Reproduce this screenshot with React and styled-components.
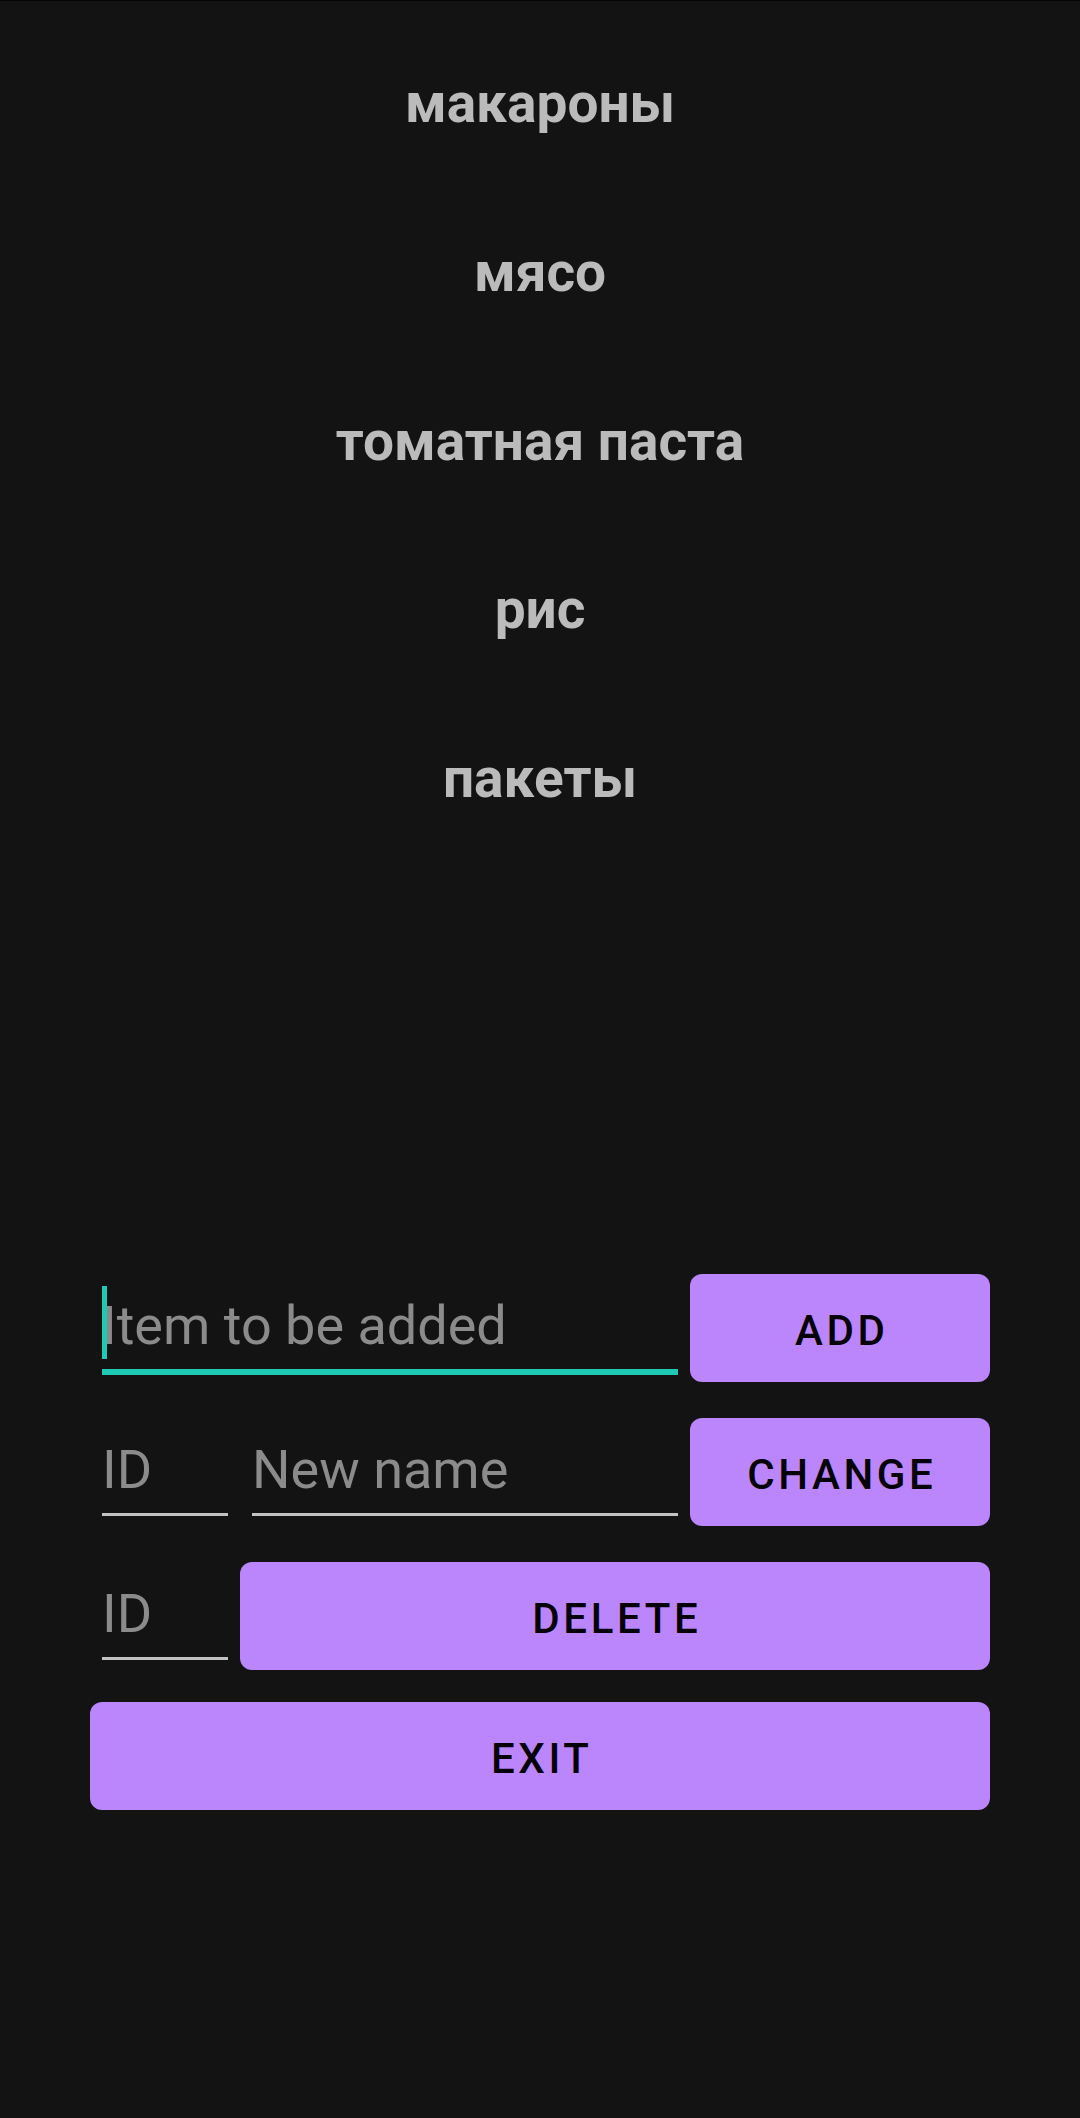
import React from "react";
import styled, { createGlobalStyle } from "styled-components";

const GlobalStyle = createGlobalStyle`
	html, body {
		margin: 0;
		padding: 0;
		background-color: #131313;
	}
	* {
		box-sizing: border-box;
	}
`;

const Screen = styled.div`
	width: 1080px;
	min-height: 2118px;
	background-color: #131313;
	border-top: 1px solid #040404;
	font-family: Roboto, "Noto Sans", sans-serif;
	display: flex;
	flex-direction: column;
`;

// List

const List = styled.ul`
	list-style: none;
	margin: 0;
	padding: 18px 0 0;
`;

const Item = styled.li`
	height: 168.75px;
	line-height: 168.75px;
	text-align: center;
	font-size: 55px;
	font-weight: 700;
	color: #bbbbbb;
`;

// Form

const Form = styled.form`
	margin: 411px 90px 0;
	display: flex;
	flex-direction: column;
`;

const Row = styled.div`
	display: flex;
	align-items: flex-start;
	padding-left: ${(props) => (props.inset ? "12px" : "0")};
	gap: ${(props) => props.gap || 12}px;
	margin-bottom: ${(props) => props.spacing || 36}px;
`;

const Field = styled.div`
	position: relative;
	flex: ${(props) => (props.width ? "none" : "1")};
	width: ${(props) => (props.width ? `${props.width}px` : "auto")};
	min-width: 0;
`;

const Input = styled.input`
	display: block;
	width: 100%;
	height: ${(props) => (props.active ? 101 : 98)}px;
	padding: 8px 0 0;
	margin: 0;
	border: none;
	border-bottom: ${(props) => (props.active ? "6px solid #1fcab4" : "3px solid #c2c2c2")};
	background: transparent;
	outline: none;
	font-family: Roboto, "Noto Sans", sans-serif;
	font-size: 54px;
	color: #e0e0e0;
	caret-color: transparent;
	&::placeholder {
		color: #8b8b8b;
		opacity: 1;
	}
`;

const Caret = styled.span`
	position: absolute;
	left: 0;
	top: 12px;
	width: 5px;
	height: 73px;
	background-color: #1fcab4;
`;

const Button = styled.button`
	flex: ${(props) => (props.width ? "none" : "1")};
	width: ${(props) => (props.width ? `${props.width}px` : "auto")};
	margin-left: ${(props) => props.pull || 0}px;
	height: 108px;
	border: none;
	border-radius: 12px;
	background-color: #bb86fc;
	color: #050008;
	font-family: Roboto, "Noto Sans", sans-serif;
	font-size: 42px;
	font-weight: 500;
	letter-spacing: 3.6px;
	text-transform: uppercase;
	padding: 5px 0 0 3.6px;
	cursor: pointer;
`;

const items = ["макароны", "мясо", "томатная паста", "рис", "пакеты"];

const App = () => {
	return (
		<>
			<GlobalStyle />
			<Screen>
				<List>
					{items.map((i) => (
						<Item key={i}>{i}</Item>
					))}
				</List>
				<Form onSubmit={(e) => e.preventDefault()}>
					<Row inset>
						<Field>
							<Input active placeholder="Item to be added" />
							<Caret />
						</Field>
						<Button type="button" width={300}>
							Add
						</Button>
					</Row>
					<Row inset gap={24}>
						<Field width={126}>
							<Input placeholder="ID" />
						</Field>
						<Field>
							<Input placeholder="New name" />
						</Field>
						<Button type="button" width={300} pull={-12}>
							Change
						</Button>
					</Row>
					<Row inset spacing={32}>
						<Field width={126}>
							<Input placeholder="ID" />
						</Field>
						<Button type="button">Delete</Button>
					</Row>
					<Row>
						<Button type="button">Exit</Button>
					</Row>
				</Form>
			</Screen>
		</>
	);
};

export default App;
